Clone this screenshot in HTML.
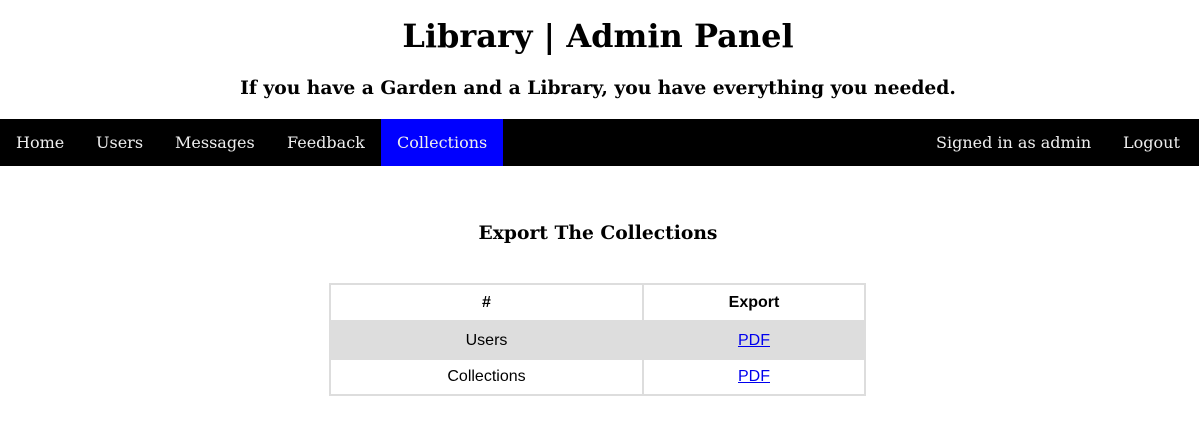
<!DOCTYPE html>
<html><head><style>
body{margin:0;width:1199px;height:433px;background:#fff;font-family:"DejaVu Serif",serif;position:relative;overflow:hidden}
.c{position:absolute;left:0;width:1196px;text-align:center;font-weight:bold;color:#000;white-space:nowrap}
nav{position:absolute;left:0;top:119px;width:1199px;height:47px;background:#000}
nav a{position:absolute;top:0;height:47px;line-height:47px;color:#eee;font-size:16px;text-decoration:none;padding:0 16px}
table{position:absolute;left:329px;top:283px;border-collapse:collapse;font-family:"Liberation Sans",Arial,sans-serif;font-size:16px;border:2px solid #ddd}
td,th{border:2px solid #ddd;text-align:center;padding:0;height:34px}
tr.g td{background:#ddd}
a.p{color:#00e}
</style></head><body>
<div class="c" style="top:14px;font-size:32px;line-height:44px">Library | Admin Panel</div>
<div class="c" style="top:76px;font-size:18.7px;line-height:24px">If you have a Garden and a Library, you have everything you needed.</div>
<nav>
<a style="left:0">Home</a>
<a style="left:80px">Users</a>
<a style="left:159px">Messages</a>
<a style="left:271px">Feedback</a>
<a style="left:381px;width:90px;background:#00f">Collections</a>
<a style="left:920px">Signed in as admin</a>
<a style="left:1107px">Logout</a>
</nav>
<div class="c" style="top:221px;font-size:18.7px;line-height:24px">Export The Collections</div>
<table>
<tr><th style="width:311px;height:35px">#</th><th style="width:220px">Export</th></tr>
<tr class="g"><td style="height:35px;padding-top:1px">Users</td><td style="padding-top:1px"><a class="p" href="#">PDF</a></td></tr>
<tr><td style="height:34px">Collections</td><td><a class="p" href="#">PDF</a></td></tr>
</table>
</body></html>
